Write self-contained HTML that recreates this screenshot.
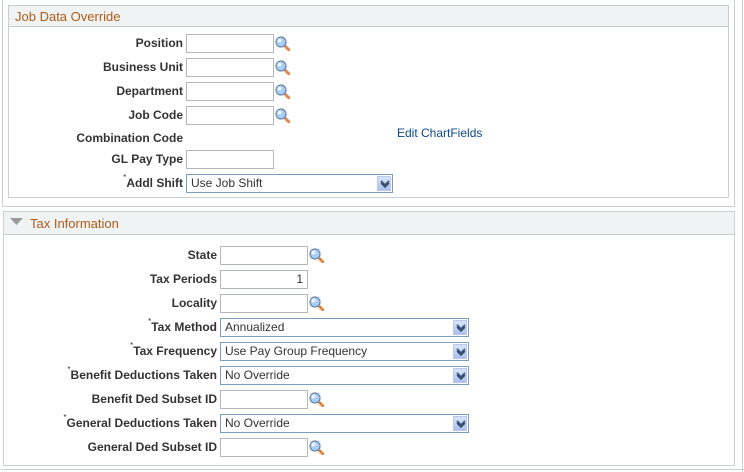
<!DOCTYPE html>
<html><head><meta charset="utf-8"><style>
*{margin:0;padding:0;box-sizing:border-box}
body{width:744px;height:472px;background:#fff;position:relative;overflow:hidden;font-family:"Liberation Sans",Arial,sans-serif;font-size:12px;color:#333}
.a{position:absolute}
.b{position:absolute;border:1px solid #cbced2}
.hd{position:absolute;background:#eff3f4;color:#b05a16;font-size:13px}
.lbl{position:absolute;font-weight:bold;text-align:right;white-space:nowrap;line-height:18px;top:0}
.in{position:absolute;height:19px;border:1px solid #b5b8bb;background:#fff;width:88px;font-size:12px;line-height:17px;padding:0 4px;text-align:right}
.sel{position:absolute;height:19px;border:1px solid #7b9ebd;background:#fff;line-height:17px;padding-left:4px;color:#333}
.sel .ar{position:absolute;right:1px;top:1px;width:14px;height:15px;background:linear-gradient(#d8e4fb,#a9c1f0);border:1px solid #b8c9ee}
.sel .ar svg{position:absolute;left:2px;top:3px}
.ic{position:absolute;width:15px;height:15px}
sup{font-size:8px;font-weight:normal;vertical-align:top;line-height:8px}
</style></head><body>
<div class="b" style="left:2px;top:-2px;width:733px;height:209px;border-top:none"></div>
<div class="a" style="left:742px;top:0;width:1px;height:472px;background:#cbced2"></div>
<div class="b" style="left:8px;top:5px;width:721px;height:193px"></div>
<div class="hd" style="left:9px;top:6px;width:719px;height:21px;border-bottom:1px solid #cbced2;padding:3px 0 0 6px">Job Data Override</div>

<div class="b" style="left:3px;top:211px;width:732px;height:255px"></div>
<div class="hd" style="left:4px;top:212px;width:730px;height:23px;border-bottom:1px solid #cbced2;padding:4px 0 0 26px">Tax Information</div>
<svg class="a" style="left:10px;top:218px" width="14" height="8"><polygon points="0,0 13,0 6.5,7" fill="#9a9a9a"/></svg>
<div class="a" style="left:0;top:469px;width:744px;height:1px;background:#cbced2"></div>

<svg width="0" height="0" style="position:absolute"><defs>
<symbol id="mg" viewBox="0 0 15 15"><line x1="9" y1="9" x2="14" y2="14" stroke="#d98a4c" stroke-width="3" stroke-linecap="round"/><circle cx="6" cy="6" r="5" fill="#a9cdf5" stroke="#6b87ad" stroke-width="1.2"/><circle cx="4.5" cy="4.5" r="2" fill="#e9f4ff"/></symbol>
<symbol id="dn" viewBox="0 0 10 8"><path d="M1 1 L5 5 L9 1 M1 3 L5 7 L9 3" stroke="#3b4f6e" stroke-width="1.6" fill="none"/></symbol>
</defs></svg>

<div class="lbl" style="right:561px;top:34px">Position</div>
<div class="in" style="left:186px;top:34px"></div><svg class="ic" style="left:275px;top:36px"><use href="#mg"/></svg>
<div class="lbl" style="right:561px;top:58px">Business Unit</div>
<div class="in" style="left:186px;top:58px"></div><svg class="ic" style="left:275px;top:60px"><use href="#mg"/></svg>
<div class="lbl" style="right:561px;top:82px">Department</div>
<div class="in" style="left:186px;top:82px"></div><svg class="ic" style="left:275px;top:84px"><use href="#mg"/></svg>
<div class="lbl" style="right:561px;top:106px">Job Code</div>
<div class="in" style="left:186px;top:106px"></div><svg class="ic" style="left:275px;top:108px"><use href="#mg"/></svg>
<div class="lbl" style="right:561px;top:129px">Combination Code</div>
<div class="a" style="left:397px;top:126px;color:#0a4a8c;line-height:14px">Edit ChartFields</div>
<div class="lbl" style="right:561px;top:150px">GL Pay Type</div>
<div class="in" style="left:186px;top:150px"></div>
<div class="lbl" style="right:561px;top:174px"><sup>*</sup>Addl Shift</div>
<div class="sel" style="left:186px;top:174px;width:207px">Use Job Shift<div class="ar"><svg width="10" height="8"><use href="#dn"/></svg></div></div>

<div class="lbl" style="right:527px;top:246px">State</div>
<div class="in" style="left:220px;top:246px"></div><svg class="ic" style="left:309px;top:248px"><use href="#mg"/></svg>
<div class="lbl" style="right:527px;top:270px">Tax Periods</div>
<div class="in" style="left:220px;top:270px">1</div>
<div class="lbl" style="right:527px;top:294px">Locality</div>
<div class="in" style="left:220px;top:294px"></div><svg class="ic" style="left:309px;top:296px"><use href="#mg"/></svg>
<div class="lbl" style="right:527px;top:318px"><sup>*</sup>Tax Method</div>
<div class="sel" style="left:220px;top:318px;width:249px">Annualized<div class="ar"><svg width="10" height="8"><use href="#dn"/></svg></div></div>
<div class="lbl" style="right:527px;top:342px"><sup>*</sup>Tax Frequency</div>
<div class="sel" style="left:220px;top:342px;width:249px">Use Pay Group Frequency<div class="ar"><svg width="10" height="8"><use href="#dn"/></svg></div></div>
<div class="lbl" style="right:527px;top:366px"><sup>*</sup>Benefit Deductions Taken</div>
<div class="sel" style="left:220px;top:366px;width:249px">No Override<div class="ar"><svg width="10" height="8"><use href="#dn"/></svg></div></div>
<div class="lbl" style="right:527px;top:390px">Benefit Ded Subset ID</div>
<div class="in" style="left:220px;top:390px"></div><svg class="ic" style="left:309px;top:392px"><use href="#mg"/></svg>
<div class="lbl" style="right:527px;top:414px"><sup>*</sup>General Deductions Taken</div>
<div class="sel" style="left:220px;top:414px;width:249px">No Override<div class="ar"><svg width="10" height="8"><use href="#dn"/></svg></div></div>
<div class="lbl" style="right:527px;top:438px">General Ded Subset ID</div>
<div class="in" style="left:220px;top:438px"></div><svg class="ic" style="left:309px;top:440px"><use href="#mg"/></svg>
</body></html>
